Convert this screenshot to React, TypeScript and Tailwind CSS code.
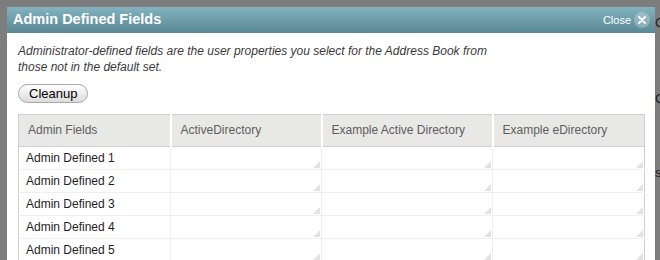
import React from "react";

type Row = {
  id: number;
  name: string;
};

const rows: Row[] = [
  { id: 1, name: "Admin Defined 1" },
  { id: 2, name: "Admin Defined 2" },
  { id: 3, name: "Admin Defined 3" },
  { id: 4, name: "Admin Defined 4" },
  { id: 5, name: "Admin Defined 5" },
];

const columns = [
  { label: "Admin Fields", width: "w-[152px]" },
  { label: "ActiveDirectory", width: "w-[151px]" },
  { label: "Example Active Directory", width: "w-[171px]" },
  { label: "Example eDirectory", width: "w-[152px]" },
];

// little grip in the corner of each editable cell
const Grip: React.FC = () => (
  <span className="absolute bottom-[1px] right-[1px] h-0 w-0 border-b-[7px] border-l-[7px] border-b-[#e2e2e2] border-l-transparent" />
);

const App: React.FC = () => {
  return (
    <div
      className="flex h-[260px] w-[660px] overflow-hidden bg-[#7d7d7d] pl-[7px] pt-[7px]"
      style={{ fontFamily: '"Liberation Sans", Arial, sans-serif' }}
    >
      <div className="w-[648px] shrink-0 bg-white">
        <div className="flex h-[26px] items-center justify-between bg-gradient-to-b from-[#82b3be] to-[#5a8894] pl-[6px] pr-[5px]">
          <h2 className="text-[14.5px] font-bold text-white">Admin Defined Fields</h2>
          <button className="flex items-center gap-[3px] text-[11px] text-white">
            Close
            <span className="flex h-[16px] w-[16px] items-center justify-center rounded-full bg-white/25">
              <svg width="8" height="8" viewBox="0 0 8 8">
                <path d="M1 1 L7 7 M7 1 L1 7" stroke="white" strokeWidth="1.8" strokeLinecap="round" />
              </svg>
            </span>
          </button>
        </div>

        <div className="pl-[11px] pt-[10px]">
          <p className="text-[12px] italic leading-[16px] text-[#3a3a3a]">
            Administrator-defined fields are the user properties you select for the Address Book from
            <br />
            those not in the default set.
          </p>

          <button className="mt-[9px] h-[19px] rounded-full border border-[#a9a9a9] bg-gradient-to-b from-white to-[#dcdcdc] px-[10px] text-[13px] leading-[17px] text-black">
            Cleanup
          </button>

          <table className="mt-[9px] border-collapse border border-[#cfcfcf] text-[12px]">
            <thead>
              <tr className="h-[32px] bg-[#e8e8e6]">
                {columns.map((col, i) => (
                  <th
                    key={col.label}
                    className={`${col.width} border-b border-b-[#cfcfcf] pb-[2px] pl-[9px] text-left font-normal text-[#5e5e5e] ${
                      i > 0 ? "border-l-2 border-l-white" : ""
                    }`}
                  >
                    {col.label}
                  </th>
                ))}
              </tr>
            </thead>
            <tbody>
              {rows.map((row) => (
                <tr key={row.id} className="h-[23px] border-b border-[#efefef]">
                  <td className="pl-[7px] text-[#1e1e1e]">{row.name}</td>
                  <td className="relative border-l border-[#efefef]">
                    <Grip />
                  </td>
                  <td className="relative border-l border-[#efefef]">
                    <Grip />
                  </td>
                  <td className="relative border-l border-[#efefef]">
                    <Grip />
                  </td>
                </tr>
              ))}
            </tbody>
          </table>
        </div>
      </div>

      <div className="flex flex-col text-[13px] leading-[16px] text-[#1a1a1a]">
        <span className="mt-[8px]">C</span>
        <span className="mt-[60px]">C</span>
        <span className="mt-[58px]">s</span>
      </div>
    </div>
  );
};

export default App;
